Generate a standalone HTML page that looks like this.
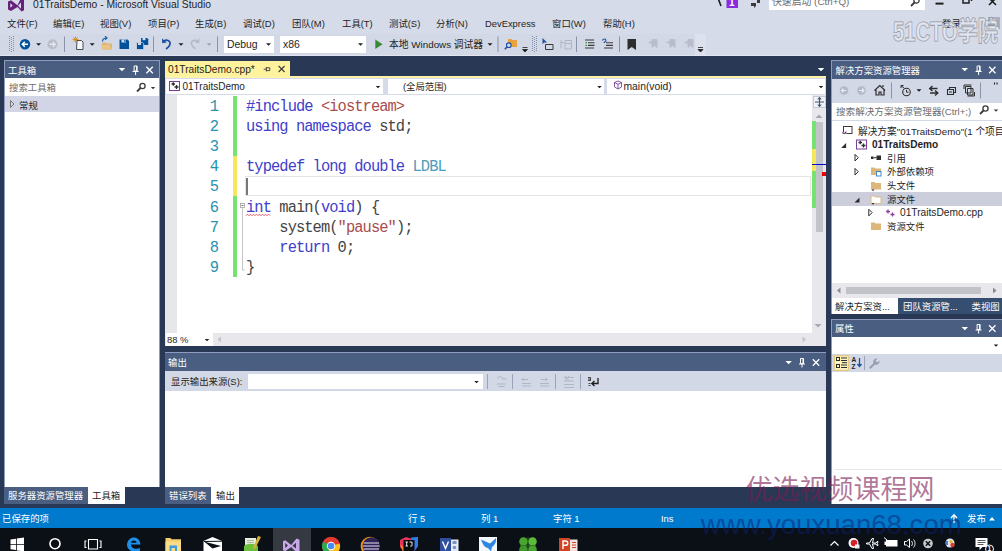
<!DOCTYPE html>
<html><head><meta charset="utf-8">
<style>
*{box-sizing:border-box;margin:0;padding:0}
html,body{width:1002px;height:551px;overflow:hidden;background:#293955}
body{position:relative;font-family:"Liberation Sans","Noto Sans CJK SC",sans-serif;font-size:9.4px;color:#1e1e1e}
.a{position:absolute;white-space:nowrap}
.top{left:0;top:0;width:1002px;height:56px;background:#d6dbe9}
.m{top:18px;font-size:9.4px;line-height:12px;color:#1e1e1e}
.pt{background:#4a5e81;color:#fff;font-size:9.4px}
.w{background:#fff}
.tb{background:#d2d8e6}
.code{transform:scaleY(1.08);transform-origin:0 60%;font-family:"Liberation Mono","Noto Sans CJK SC",monospace;font-size:15.4px;line-height:20px;letter-spacing:-0.910px;color:#444;left:246px}
.kw{color:#4040cc}.str{color:#aa4c4c}.ty{color:#4d9cba}
.ln{transform:scaleY(1.08);transform-origin:0 60%;font-family:"Liberation Mono",monospace;font-size:15.4px;line-height:20px;color:#2b91af;text-align:right;width:30px;left:189px}
.sep{width:1px;background:#8591ab}
.t{font-size:9.4px;line-height:13px;color:#1e1e1e}
.wt{color:#fff}
svg{position:absolute;overflow:visible}
</style></head><body>
<!-- top chrome -->
<div class="a top"></div>
<div class="a tb" style="left:0;top:34px;width:695px;height:20.500px"></div><div class="a" style="left:695px;top:34px;width:10.500px;height:20.500px;background:#dde1ee"></div><div class="a" style="left:0;top:54.500px;width:1002px;height:1.500px;background:#e2e6f0"></div>
<div class="a" style="left:33px;top:-2.300px;font-size:10.300px;line-height:14px;color:#1e1e1e">01TraitsDemo - Microsoft Visual Studio</div>
<!-- menu -->
<div class="a m" style="left:7px">文件(F)</div>
<div class="a m" style="left:53px">编辑(E)</div>
<div class="a m" style="left:100px">视图(V)</div>
<div class="a m" style="left:148px">项目(P)</div>
<div class="a m" style="left:195px">生成(B)</div>
<div class="a m" style="left:243px">调试(D)</div>
<div class="a m" style="left:292px">团队(M)</div>
<div class="a m" style="left:342px">工具(T)</div>
<div class="a m" style="left:389px">测试(S)</div>
<div class="a m" style="left:436px">分析(N)</div>
<div class="a m" style="left:485px">DevExpress</div>
<div class="a m" style="left:552px">窗口(W)</div>
<div class="a m" style="left:603px">帮助(H)</div>
<div class="a m" style="left:942px">登录</div>
<!-- quick launch -->
<div class="a w" style="left:769px;top:0;width:156px;height:10px"></div>
<div class="a" style="left:772px;top:-3.800px;font-size:9.850px;line-height:12px;color:#6d6d6d">快速启动 (Ctrl+Q)</div>
<!-- toolbar combos -->
<div class="a w" style="left:224px;top:36px;width:50px;height:17px"></div>
<div class="a" style="left:227px;top:38px;font-size:10.4px;line-height:13px">Debug</div>
<div class="a w" style="left:280px;top:36px;width:86px;height:17px"></div>
<div class="a" style="left:283px;top:38px;font-size:10.4px;line-height:13px">x86</div>
<div class="a" style="left:389px;top:38px;font-size:9.800px;line-height:13px">本地 Windows 调试器</div>

<!-- toolbox panel -->
<div class="a" style="left:4px;top:60px;width:156px;height:444px;background:#8e9bbc"></div>
<div class="a pt" style="left:5px;top:61px;width:154px;height:17px;line-height:19.500px;padding-left:3px">工具箱</div>
<div class="a w" style="left:5px;top:78px;width:154px;height:409px"></div>
<div class="a" style="left:9px;top:82px;font-size:9.400px;line-height:12px;color:#6d6d6d">搜索工具箱</div>
<div class="a" style="left:5px;top:96px;width:154px;height:16px;background:#d2d5e5"></div>
<div class="a t" style="left:19px;top:99px">常规</div>
<div class="a" style="left:4px;top:487px;width:156px;height:17px;background:#293955"></div>
<div class="a pt" style="left:4px;top:487px;width:84px;height:17px;line-height:18.500px;padding-left:4px">服务器资源管理器</div>
<div class="a w" style="left:88px;top:487px;width:37px;height:17px;line-height:18.500px;padding-left:4px">工具箱</div>

<!-- editor -->
<div class="a" style="left:165px;top:61px;width:125px;height:17px;background:#fff29d"></div>
<div class="a" style="left:165px;top:75.500px;width:661px;height:2.500px;background:#fdf3a8"></div>
<div class="a" style="left:168px;top:63px;font-size:10.200px;line-height:13px;color:#1e1e1e">01TraitsDemo.cpp*</div>
<div class="a" style="left:165px;top:78px;width:661px;height:17px;background:#d6dbe9"></div>
<div class="a w" style="left:166px;top:78.500px;width:217px;height:15.500px"></div>
<div class="a w" style="left:387.500px;top:78.500px;width:216.500px;height:15.500px"></div>
<div class="a w" style="left:607px;top:78.500px;width:218px;height:15.500px"></div>
<div class="a" style="left:182.500px;top:80px;font-size:10px;line-height:13px">01TraitsDemo</div>
<div class="a" style="left:403px;top:80px;font-size:9.400px;line-height:13px">(全局范围)</div>
<div class="a" style="left:623.500px;top:80px;font-size:10.350px;line-height:13px">main(void)</div>
<div class="a w" style="left:165px;top:94.500px;width:661px;height:238.500px"></div>
<div class="a" style="left:165px;top:95px;width:12px;height:238px;background:#e6e7e8"></div>
<div class="a" style="left:812px;top:94.500px;width:14px;height:238.500px;background:#e8e8ec"></div>
<div class="a" style="left:165px;top:333px;width:661px;height:13px;background:#e8e8ec"></div>
<div class="a w" style="left:166px;top:333px;width:47px;height:13px"></div>
<div class="a" style="left:167px;top:334px;font-size:9.4px;line-height:12px">88 %</div>
<!-- change bars -->
<div class="a" style="left:233px;top:96px;width:4px;height:60px;background:#75e272"></div>
<div class="a" style="left:233px;top:156px;width:4px;height:40px;background:#f6e65c"></div>
<div class="a" style="left:233px;top:196px;width:4px;height:81px;background:#75e272"></div>
<!-- current line -->
<div class="a" style="left:245px;top:176px;width:566px;height:20px;border:1px solid #e4e4e4"></div>
<div class="a" style="left:246px;top:178px;width:1.500px;height:17px;background:#777"></div>
<!-- line numbers -->
<div class="a ln" style="top:96.6px">1</div>
<div class="a ln" style="top:116.6px">2</div>
<div class="a ln" style="top:137.1px">3</div>
<div class="a ln" style="top:157.1px">4</div>
<div class="a ln" style="top:177.1px">5</div>
<div class="a ln" style="top:197.6px">6</div>
<div class="a ln" style="top:217.6px">7</div>
<div class="a ln" style="top:237.6px">8</div>
<div class="a ln" style="top:257.6px">9</div>
<!-- code -->
<div class="a code" style="top:96.6px"><span class="kw">#include</span> <span class="str">&lt;iostream&gt;</span></div>
<div class="a code" style="top:116.6px"><span class="kw">using namespace</span> std;</div>
<div class="a code" style="top:157.1px"><span class="kw">typedef long double</span> <span class="ty">LDBL</span></div>
<div class="a code" style="top:197.6px"><span class="kw">int</span> main(<span class="kw">void</span>) {</div>
<div class="a code" style="top:217.6px">&nbsp;&nbsp;&nbsp;&nbsp;system(<span class="str">"pause"</span>);</div>
<div class="a code" style="top:237.6px">&nbsp;&nbsp;&nbsp;&nbsp;<span class="kw">return</span> 0;</div>
<div class="a code" style="top:257.6px">}</div>
<!-- scrollbar -->
<div class="a" style="left:812px;top:121px;width:4px;height:87px;background:#75e272"></div>
<div class="a" style="left:812px;top:149px;width:4px;height:22px;background:#f6e65c"></div>
<div class="a" style="left:816px;top:122px;width:7px;height:110px;background:#c2c3c9"></div>
<div class="a" style="left:812px;top:164px;width:14px;height:1px;background:#0000cd"></div>
<div class="a" style="left:822px;top:172px;width:4px;height:4px;background:#e00"></div>

<!-- output panel -->
<div class="a" style="left:165px;top:352px;width:661px;height:20px;background:#8e9bbc"></div>
<div class="a pt" style="left:165px;top:353px;width:661px;height:18.300px;line-height:20.500px;padding-left:3px">输出</div>
<div class="a tb" style="left:165px;top:371.300px;width:661px;height:20px"></div>
<div class="a t" style="left:171px;top:375px">显示输出来源(S):</div>
<div class="a w" style="left:247.500px;top:374px;width:235px;height:15px"></div>
<div class="a w" style="left:165px;top:391.300px;width:661px;height:95.700px"></div>
<div class="a pt" style="left:165px;top:487px;width:46px;height:17px;line-height:18.500px;padding-left:4px">错误列表</div>
<div class="a w" style="left:211px;top:487px;width:28px;height:17px;line-height:18.500px;padding-left:5px">输出</div>

<!-- solution explorer -->
<div class="a" style="left:831px;top:60px;width:171px;height:254px;background:#8e9bbc"></div>
<div class="a pt" style="left:832px;top:61px;width:170px;height:18px;line-height:20.500px;padding-left:3.500px">解决方案资源管理器</div>
<div class="a tb" style="left:832px;top:79px;width:170px;height:42px"></div>
<div class="a w" style="left:832px;top:102.700px;width:170px;height:17px"></div>
<div class="a" style="left:836px;top:105px;font-size:9.600px;line-height:13px;color:#6d6d6d">搜索解决方案资源管理器(Ctrl+;)</div>
<div class="a w" style="left:832px;top:120.700px;width:170px;height:162.300px"></div>
<div class="a" style="left:832px;top:192px;width:170px;height:14px;background:#cccedb"></div>
<div class="a t" style="left:858px;top:124.500px;font-size:9.700px">解决方案"01TraitsDemo"(1 个项目)</div>
<div class="a t" style="left:872px;top:138px;font-weight:bold;font-size:10.100px">01TraitsDemo</div>
<div class="a t" style="left:887px;top:151.5px">引用</div>
<div class="a t" style="left:887px;top:165px">外部依赖项</div>
<div class="a t" style="left:887px;top:179px">头文件</div>
<div class="a t" style="left:887px;top:192.5px">源文件</div>
<div class="a t" style="left:900px;top:206px;font-size:10.200px">01TraitsDemo.cpp</div>
<div class="a t" style="left:887px;top:220px">资源文件</div>
<div class="a" style="left:832px;top:283px;width:170px;height:15px;background:#e8e8ec"></div>
<div class="a" style="left:845.500px;top:287px;width:135px;height:7px;background:#c2c3c9"></div>
<div class="a" style="left:832px;top:298px;width:170px;height:16px;background:#364e6f"></div>
<div class="a w" style="left:832px;top:298px;width:66px;height:16px;line-height:17.500px;padding-left:3px">解决方案资...</div>
<div class="a wt" style="left:903px;top:298px;line-height:17.500px">团队资源管...</div>
<div class="a wt" style="left:971.500px;top:298px;line-height:17.500px">类视图</div>

<!-- properties -->
<div class="a" style="left:831px;top:319px;width:171px;height:185px;background:#8e9bbc"></div>
<div class="a pt" style="left:832px;top:320px;width:170px;height:17px;line-height:18.500px;padding-left:3px">属性</div>
<div class="a w" style="left:832px;top:337px;width:170px;height:17px"></div>
<div class="a tb" style="left:832px;top:354.300px;width:170px;height:17.500px"></div>
<div class="a w" style="left:832px;top:371.800px;width:170px;height:132.200px"></div>
<div class="a" style="left:835px;top:469px;width:167px;height:1px;background:#e6e6e6"></div>

<!-- status bar -->
<div class="a" style="left:0;top:508px;width:1002px;height:19.500px;background:#007acc"></div>
<div class="a wt" style="left:2px;top:512px;line-height:13px">已保存的项</div>
<div class="a wt" style="left:408px;top:512px;line-height:13px">行 5</div>
<div class="a wt" style="left:481px;top:512px;line-height:13px">列 1</div>
<div class="a wt" style="left:553px;top:512px;line-height:13px">字符 1</div>
<div class="a wt" style="left:661px;top:512px;line-height:13px">Ins</div>
<div class="a wt" style="left:967px;top:512px;line-height:13px">发布</div>
<!-- taskbar -->
<div class="a" style="left:0;top:527.500px;width:1002px;height:23.500px;background:#0b1017"></div>
<div class="a" style="left:272.500px;top:527.500px;width:38px;height:23.500px;background:#353a42"></div>

<!-- icons -->
<svg class="a" style="left:0;top:0" width="1002" height="551" viewBox="0 0 1002 551"><path d="M8 1.5L11 0.2L17.5 5.2L21.5 -3L24 -2V10.2L21.5 11.4L17.5 7L11 11L8 9.6zM10.3 3.3V7.8L12.8 5.5zM21 2.5L18 5.7L21 8.8z" fill="#68217a" fill-rule="evenodd"/>
<path d="M718 -2L721 6" stroke="#1e1e1e" stroke-width="1.6"/>
<rect x="726.5" y="-2" width="11.5" height="10" fill="#8a2be2"/>
<path d="M751 3h5v3l-2 2v-2h-3zM757 0h3v3h-3z" fill="#3b3b3b"/>
<g stroke="#3b3b3b" fill="none"><circle cx="916.5" cy="0.5" r="2.6" stroke-width="1.3"/><path d="M914.5 2.5L911 6" stroke-width="1.8"/></g>
<path d="M935.500 3.600h8" stroke="#1e1e1e" stroke-width="2"/>
<path d="M963 -3h6v6h-6zM965.5 -5h6v6" stroke="#1e1e1e" stroke-width="1.500" fill="none"/>
<path d="M989 -2L996 5M996 -2L989 5" stroke="#1e1e1e" stroke-width="1.600"/>
<rect x="988" y="17" width="12" height="12" fill="#a9afbd"/><circle cx="994" cy="21.5" r="2.2" fill="#e8ebf2"/><path d="M989.5 29c0-4 9-4 9 0z" fill="#e8ebf2"/>
<rect x="9" y="36" width="1" height="1" fill="#8591ab"/><rect x="11" y="37" width="1" height="1" fill="#8591ab"/><rect x="13" y="36" width="1" height="1" fill="#8591ab"/>
<rect x="532" y="36" width="1" height="1" fill="#8591ab"/><rect x="534" y="37" width="1" height="1" fill="#8591ab"/><rect x="536" y="36" width="1" height="1" fill="#8591ab"/>
<rect x="9" y="38" width="1" height="1" fill="#8591ab"/><rect x="11" y="39" width="1" height="1" fill="#8591ab"/><rect x="13" y="38" width="1" height="1" fill="#8591ab"/>
<rect x="532" y="38" width="1" height="1" fill="#8591ab"/><rect x="534" y="39" width="1" height="1" fill="#8591ab"/><rect x="536" y="38" width="1" height="1" fill="#8591ab"/>
<rect x="9" y="40" width="1" height="1" fill="#8591ab"/><rect x="11" y="41" width="1" height="1" fill="#8591ab"/><rect x="13" y="40" width="1" height="1" fill="#8591ab"/>
<rect x="532" y="40" width="1" height="1" fill="#8591ab"/><rect x="534" y="41" width="1" height="1" fill="#8591ab"/><rect x="536" y="40" width="1" height="1" fill="#8591ab"/>
<rect x="9" y="42" width="1" height="1" fill="#8591ab"/><rect x="11" y="43" width="1" height="1" fill="#8591ab"/><rect x="13" y="42" width="1" height="1" fill="#8591ab"/>
<rect x="532" y="42" width="1" height="1" fill="#8591ab"/><rect x="534" y="43" width="1" height="1" fill="#8591ab"/><rect x="536" y="42" width="1" height="1" fill="#8591ab"/>
<rect x="9" y="44" width="1" height="1" fill="#8591ab"/><rect x="11" y="45" width="1" height="1" fill="#8591ab"/><rect x="13" y="44" width="1" height="1" fill="#8591ab"/>
<rect x="532" y="44" width="1" height="1" fill="#8591ab"/><rect x="534" y="45" width="1" height="1" fill="#8591ab"/><rect x="536" y="44" width="1" height="1" fill="#8591ab"/>
<rect x="9" y="46" width="1" height="1" fill="#8591ab"/><rect x="11" y="47" width="1" height="1" fill="#8591ab"/><rect x="13" y="46" width="1" height="1" fill="#8591ab"/>
<rect x="532" y="46" width="1" height="1" fill="#8591ab"/><rect x="534" y="47" width="1" height="1" fill="#8591ab"/><rect x="536" y="46" width="1" height="1" fill="#8591ab"/>
<rect x="9" y="48" width="1" height="1" fill="#8591ab"/><rect x="11" y="49" width="1" height="1" fill="#8591ab"/><rect x="13" y="48" width="1" height="1" fill="#8591ab"/>
<rect x="532" y="48" width="1" height="1" fill="#8591ab"/><rect x="534" y="49" width="1" height="1" fill="#8591ab"/><rect x="536" y="48" width="1" height="1" fill="#8591ab"/>
<rect x="9" y="50" width="1" height="1" fill="#8591ab"/><rect x="11" y="51" width="1" height="1" fill="#8591ab"/><rect x="13" y="50" width="1" height="1" fill="#8591ab"/>
<rect x="532" y="50" width="1" height="1" fill="#8591ab"/><rect x="534" y="51" width="1" height="1" fill="#8591ab"/><rect x="536" y="50" width="1" height="1" fill="#8591ab"/>
<circle cx="25" cy="44.3" r="5.2" fill="#00529b"/><path d="M28 44.3H22.6M24.8 41.8L22.3 44.3L24.8 46.8" stroke="#fff" stroke-width="1.5" fill="none"/>
<path d="M36.1 43.25h5l-2.5 2.5z" fill="#1e1e1e"/>
<circle cx="52.5" cy="44.3" r="5" fill="#b9bdc9"/><path d="M49.5 44.3H55M52.8 41.9L55.2 44.3L52.8 46.7" stroke="#e4e7ef" stroke-width="1.4" fill="none"/>
<path d="M64.5 36.5V52" stroke="#8a93a8" stroke-width="1"/>
<path d="M77 40.5h4.5l1.5 1.5v7.5h-6.5z" fill="#f4f6fa" stroke="#3b3b3b" stroke-width="0.9"/><path d="M75.5 36.5v6M72.5 39.5h6M73.4 37.4l4.2 4.2M77.6 37.4l-4.2 4.2" stroke="#d9932a" stroke-width="1"/>
<path d="M89.7 43.25h5l-2.5 2.5z" fill="#1e1e1e"/>
<path d="M102 42.5h4l1 1h5v6h-10z" fill="#dcb67a"/><path d="M101 45h8.5l2.5 4.5h-10z" fill="#eac282"/><path d="M102.5 41.5c0-2.5 1.5-3.5 4-3.500M105 36.3l2 1.7l-2 1.700" stroke="#1e62b8" stroke-width="1.2" fill="none"/>
<path d="M119.5 39.500h8l1.500 1.500v8h-9.500z" fill="#00529b"/><rect x="121.500" y="39.500" width="4.500" height="3" fill="#d6dbe9"/><rect x="124.300" y="40" width="1.200" height="2" fill="#00529b"/>
<path d="M141 38h6l1.200 1.200v5.800h-7.200z" fill="#00529b"/><rect x="142.500" y="38" width="3" height="2.200" fill="#d6dbe9"/><path d="M136.500 42.500h6l1.200 1.200v5.800h-7.200z" fill="#00529b" stroke="#d6dbe9" stroke-width="0.8"/><rect x="138" y="42.800" width="3" height="2.200" fill="#d6dbe9"/>
<path d="M153.5 36.5V52" stroke="#8a93a8" stroke-width="1"/>
<path d="M163.500 41.500c3-2.500 7-1 6.500 2.500c-0.300 2.200-2 3.700-4 5" stroke="#1c4fa3" stroke-width="1.700" fill="none"/><path d="M162 38.500l0.300 4.800l4.500-0.800z" fill="#1c4fa3"/>
<path d="M178.5 43.25h5l-2.5 2.5z" fill="#1e1e1e"/>
<path d="M198 41.500c-3-2.500-7-1-6.500 2.500c0.300 2.200 2 3.700 4 5" stroke="#b3b9c8" stroke-width="1.500" fill="none"/><path d="M199.500 38.500l-0.300 4.800l-4.500-0.800z" fill="#b3b9c8"/>
<path d="M206.7 43.25h5l-2.5 2.5z" fill="#9aa2b5"/>
<path d="M217.5 36.5V52" stroke="#8a93a8" stroke-width="1"/>
<path d="M266.0 43.25h5l-2.5 2.5z" fill="#1e1e1e"/>
<path d="M358.0 43.25h5l-2.5 2.5z" fill="#1e1e1e"/>
<path d="M375.300 39.500l7.200 4.800l-7.200 4.800z" fill="#388a34"/>
<path d="M487.5 43.25h5l-2.5 2.5z" fill="#1e1e1e"/>
<path d="M498 36.5V52" stroke="#8a93a8" stroke-width="1"/>
<path d="M508 39h3.500l1 1h4.500v7h-9z" fill="#e8a33d"/><circle cx="508.800" cy="45.200" r="2.300" fill="#d6dbe9" stroke="#1c4fa3" stroke-width="1.100"/><path d="M507.300 46.800l-2.500 2.500" stroke="#1c4fa3" stroke-width="1.500"/>
<path d="M522.500 47.500h5M522.500 49.500h5l-2.500 2.500z" stroke="#1e1e1e" stroke-width="0.800" fill="#1e1e1e"/>
<path d="M542.500 38l4.500 4.500h-2.800l-1.700 1.800z" fill="#1c4fa3"/><path d="M545.500 44.500h7.500v5h-7.500z" fill="none" stroke="#3b3b3b" stroke-width="1"/>
<path d="M561 40v8.500M561 42.500h3M565 40.500h6.500v8.500h-6.500zM565 43.500h6.500" fill="none" stroke="#b0b6c6" stroke-width="1"/>
<path d="M576.5 36.5V52" stroke="#8a93a8" stroke-width="1"/>
<path d="M585 40h9M588 42.700h6.500M588 45.400h6.500M585 48h9" stroke="#3b3b3b" stroke-width="1.100"/><path d="M585.500 42.700h1.500M585.500 45.400h1.500" stroke="#388a34" stroke-width="1.200"/>
<path d="M606 42.700h7M606 45.400h7M604 48h9" stroke="#3b3b3b" stroke-width="1.100"/><path d="M602.500 40.500c0.500-2 3.500-2 3.500 0c0 1.200-2 1.300-2 2.500" stroke="#1c4fa3" stroke-width="1.100" fill="none"/>
<path d="M619.5 36.5V52" stroke="#8a93a8" stroke-width="1"/>
<path d="M627.500 39h8.500v11l-4.250-3l-4.250 3z" fill="#2d2d2d"/>
<path d="M652 39.500h5v8l-2.500-2l-2.500 2zM648 42.500h3.500M650 41l1.800 1.500l-1.800 1.500" fill="#b8bdcb" stroke="#b8bdcb" stroke-width="0.800"/>
<path d="M670 39.500h5v8l-2.500-2l-2.500 2zM666 42.500h3.500M668 41l1.800 1.500l-1.800 1.500" fill="#b8bdcb" stroke="#b8bdcb" stroke-width="0.800"/>
<path d="M688 39.500h5v8l-2.500-2l-2.500 2zM684 42.500h3.500M686 41l1.800 1.500l-1.800 1.500" fill="#b8bdcb" stroke="#b8bdcb" stroke-width="0.800"/>
<path d="M698 47.500h5M698 49.500h5l-2.500 2.500z" stroke="#1e1e1e" stroke-width="0.800" fill="#1e1e1e"/>
<path d="M118.75 67.975h6.5l-3.25 3.25z" fill="#fff"/>
<g stroke="#fff" stroke-width="1" fill="none"><path d="M134.1 66h3v5h-3z"/><path d="M132.6 71.5h6M135.6 71.5v3.5"/></g><path d="M136.1 66h1v5h-1z" fill="#fff"/>
<path d="M146.4 66.8L152.79999999999998 73.2M152.79999999999998 66.8L146.4 73.2" stroke="#fff" stroke-width="1.3" fill="none"/>
<g stroke="#3b3b3b" fill="none"><circle cx="142.5" cy="86.0" r="2.6" stroke-width="1.3"/><path d="M140.5 88.0L137 91.5" stroke-width="1.8"/></g>
<path d="M150.75 86.875h4.5l-2.25 2.25z" fill="#3b3b3b"/>
<path d="M10.500 100.500l3.500 3.500l-3.500 3.500z" fill="none" stroke="#6d6d6d" stroke-width="0.900"/>
<g stroke="#3a3a3a" stroke-width="0.900" fill="none"><path d="M266.300 67v4.400M266.300 67.800h3.500v2.800h-3.500M263.700 69.200h2.600"/></g>
<path d="M278.6 66L284.6 72M284.6 66L278.6 72" stroke="#3a3a3a" stroke-width="1.1" fill="none"/>
<path d="M817.75 67.875h6.5l-3.25 3.25z" fill="#fff"/>
<rect x="169.500" y="81.500" width="10" height="9" fill="#fff" stroke="#7b3f98" stroke-width="1"/><path d="M171.500 84h3.500M173.250 82.300v3.400M174.500 87h4M176.500 85v4" stroke="#2d2d2d" stroke-width="1.300"/>
<path d="M375.75 85.875h4.5l-2.25 2.25z" fill="#1e1e1e"/>
<path d="M597.25 85.875h4.5l-2.25 2.25z" fill="#1e1e1e"/>
<path d="M818.75 85.875h4.5l-2.25 2.25z" fill="#1e1e1e"/>
<path d="M614.500 82.500l3.500-1.500l3.500 1.500v4.500l-3.500 2l-3.500-2zM614.500 82.500l3.500 1.800l3.500-1.800M618 84.300v4.500" fill="none" stroke="#7b3f98" stroke-width="0.900"/>
<rect x="813.500" y="96.500" width="12" height="11" fill="#f2f3f7" stroke="#c8cad4"/><path d="M819.500 97.500v9M815 102h9M817.800 99.500l1.700-2l1.700 2M817.800 104.500l1.700 2l1.700-2" stroke="#3c5a78" stroke-width="1.100" fill="none"/>
<path d="M815.500 118l3.500-3.500l3.500 3.500z" fill="#a6a8b3"/>
<path d="M814.500 324l3.500 3.500l3.500-3.500z" fill="#a6a8b3"/>
<path d="M221 336.500v6l-3.500-3z" fill="#c2c4cc"/><path d="M802.500 336.500v6l3.500-3z" fill="#c2c4cc"/>
<path d="M204.75 338.875h4.5l-2.25 2.25z" fill="#1e1e1e"/>
<rect x="240.500" y="203.500" width="4" height="4" fill="#fff" stroke="#a0a0a0" stroke-width="0.800"/><path d="M241.500 205.500h2" stroke="#555" stroke-width="0.800"/><path d="M242.500 208v62h2.500" stroke="#b8b8b8" stroke-width="0.800" fill="none"/>
<path d="M246 215.700l1.500-1.500l1.500 1.500l1.500-1.500l1.500 1.500l1.500-1.500l1.500 1.500l1.500-1.500l1.500 1.500l1.500-1.500l1.500 1.500l1.500-1.500l1.500 1.500l1.500-1.500l1.500 1.500l1.500-1.500l1.500 1.500" stroke="#e0424d" stroke-width="0.900" fill="none"/>
<path d="M785.45 360.875h6.5l-3.25 3.25z" fill="#fff"/>
<g stroke="#fff" stroke-width="1" fill="none"><path d="M800.5 358.5h3v5h-3z"/><path d="M799 364.0h6M802 364.0v3.5"/></g><path d="M802.5 358.5h1v5h-1z" fill="#fff"/>
<path d="M812.8 359.3L819.2 365.7M819.2 359.3L812.8 365.7" stroke="#fff" stroke-width="1.3" fill="none"/>
<path d="M474.25 380.875h4.5l-2.25 2.25z" fill="#1e1e1e"/>
<path d="M487.5 374V389" stroke="#9aa3b8" stroke-width="1"/>
<path d="M512.5 374V389" stroke="#9aa3b8" stroke-width="1"/>
<path d="M555.5 374V389" stroke="#9aa3b8" stroke-width="1"/>
<path d="M580.5 374V389" stroke="#9aa3b8" stroke-width="1"/>
<g stroke="#b0b6c6" stroke-width="1" fill="none"><path d="M497 384h9M498.500 386.500h6M497.500 378.500c1-2.500 5-2.500 5 0.500h4"/></g>
<g stroke="#b0b6c6" stroke-width="1" fill="none"><path d="M522 383.500h9M522 386h9M522 379.500h6M523.500 378l-1.800 1.500l1.800 1.500"/></g>
<g stroke="#b0b6c6" stroke-width="1" fill="none"><path d="M540 383.500h9M540 386h9M541 379.500h6M545.500 378l1.800 1.500l-1.800 1.500"/></g>
<g stroke="#b0b6c6" stroke-width="1" fill="none"><path d="M564 377.500h10M564 381h10M564 384.500h10M564 387.500h10M565 376l4 4.500M569 376l-4 4.500"/></g>
<g stroke="#1e1e1e" stroke-width="1.300" fill="none"><path d="M598 378v5.500h-6M594.500 381l-2.700 2.500l2.700 2.500"/></g><path d="M588 377.500h2.500v3h-2.500M588 379h2.500M588.500 383.500h2M588.500 385.500h2" stroke="#1e1e1e" stroke-width="0.800" fill="none"/>
<path d="M961.55 68.075h6.5l-3.25 3.25z" fill="#fff"/>
<g stroke="#fff" stroke-width="1" fill="none"><path d="M977.1 66h3v5h-3z"/><path d="M975.6 71.5h6M978.6 71.5v3.5"/></g><path d="M979.1 66h1v5h-1z" fill="#fff"/>
<path d="M989.0999999999999 66.8L995.5 73.2M995.5 66.8L989.0999999999999 73.2" stroke="#fff" stroke-width="1.3" fill="none"/>
<circle cx="844" cy="90.500" r="4.300" fill="#b3b8c6"/><path d="M846.500 90.500h-4.800M843.500 88.500l-2 2l2 2" stroke="#e8ebf2" stroke-width="1.200" fill="none"/>
<circle cx="861.500" cy="90.500" r="4.300" fill="#b3b8c6"/><path d="M859 90.500h4.800M862 88.500l2 2l-2 2" stroke="#e8ebf2" stroke-width="1.200" fill="none"/>
<path d="M874.500 90.500l5.300-5l5.300 5M876 90v5h3v-3h2v3h3v-5M883 87v-2" stroke="#2d2d2d" stroke-width="1.200" fill="none"/>
<path d="M891.5 82.5V98.5" stroke="#8a93a8" stroke-width="1"/>
<circle cx="906.500" cy="92" r="3.800" fill="none" stroke="#2d2d2d" stroke-width="1.100"/><path d="M906.500 89.800v2.400h2M901 85.500l3 2.500M901 85.500h2.500M901 85.500v2.500" stroke="#2d2d2d" stroke-width="1" fill="none"/>
<path d="M916.5 89.25h5l-2.5 2.5z" fill="#1e1e1e"/>
<path d="M937.500 88.500h-7.500M932.500 86l-2.800 2.500l2.800 2.500M930 93h7.500M935 90.500l2.800 2.500l-2.800 2.500" stroke="#2d2d2d" stroke-width="1.400" fill="none"/>
<path d="M947.500 89.500h6v5h-6zM949.500 89.500v-2h6v5h-2M949 92h3" stroke="#2d2d2d" stroke-width="1.100" fill="none"/>
<path d="M965.500 86.500h5.500v6.500h-5.500zM967.500 88.500h5.500v6.500h-5.500zM964 89v-4h7.500M974.500 92v4h-7" stroke="#2d2d2d" stroke-width="1" fill="none"/>
<path d="M980.5 82.5V98.5" stroke="#8a93a8" stroke-width="1"/>
<path d="M994.500 82.500v2M997 82.500v2" stroke="#1e1e1e" stroke-width="1.100"/>
<g stroke="#3b3b3b" fill="none"><circle cx="985.5" cy="108.5" r="2.6" stroke-width="1.3"/><path d="M983.5 110.5L980 114" stroke-width="1.8"/></g>
<path d="M993.75 109.375h4.5l-2.25 2.25z" fill="#3b3b3b"/>
<rect x="843.500" y="126.500" width="8.500" height="7" fill="#fff" stroke="#3b3b3b" stroke-width="1"/><path d="M842 131.500l2 1.500l2.500-2.500v4l-2.500-2.200l-2 1.700z" fill="#68217a" stroke="#fff" stroke-width="0.400"/>
<path d="M846.1 143.0v5h-5z" fill="#2d2d2d"/>
<rect x="856.500" y="140" width="10" height="9" fill="#fff" stroke="#7b3f98" stroke-width="1"/><path d="M858.500 142.500h3.500M860.250 140.800v3.400M861.500 145.500h4M863.500 143.500v4" stroke="#2d2d2d" stroke-width="1.300"/>
<path d="M855.0 154.39999999999998l3.300 3.300l-3.300 3.300z" fill="none" stroke="#2d2d2d" stroke-width="1"/>
<rect x="871" y="156.500" width="2.500" height="2.500" fill="#2d2d2d"/><path d="M873.500 157.700h3" stroke="#2d2d2d"/><rect x="876.500" y="155.500" width="4.500" height="4.500" fill="#2d2d2d"/>
<path d="M855.0 168.39999999999998l3.300 3.300l-3.300 3.300z" fill="none" stroke="#2d2d2d" stroke-width="1"/>
<path d="M871 167.5h3.500l1 1h5.500v6.500h-10z" fill="#dcb67a"/>
<rect x="876.500" y="171.500" width="4.500" height="4.500" fill="#fff" stroke="#3a8bd0" stroke-width="1"/>
<path d="M871 182.0h3.500l1 1h5.500v6.500h-10z" fill="#dcb67a"/>
<path d="M871.500 189.500h3l-1.500 1.800z" fill="#2d2d2d"/>
<path d="M859.5 197.5v5h-5z" fill="#2d2d2d"/>
<path d="M871 196h3.500l1 1h5.500v6.500h-10z" fill="#fff" stroke="#dcb67a" stroke-width="0.900"/><path d="M871.500 203h3l-1.500 1.800z" fill="#2d2d2d"/>
<path d="M868.8 209.29999999999998l3.300 3.300l-3.300 3.300z" fill="none" stroke="#2d2d2d" stroke-width="1"/>
<path d="M886 211.500h4M888 209.500v4M890.500 214.500h4M892.500 212.500v4" stroke="#8b3fa0" stroke-width="1.300"/>
<path d="M871 222.5h3.500l1 1h5.500v6.500h-10z" fill="#dcb67a"/>
<path d="M840.500 287.500v6l-3.500-3z" fill="#868999"/><path d="M993 287.500v6l3.500-3z" fill="#868999"/>
<path d="M961.55 326.875h6.5l-3.25 3.25z" fill="#fff"/>
<g stroke="#fff" stroke-width="1" fill="none"><path d="M977.1 324.5h3v5h-3z"/><path d="M975.6 330.0h6M978.6 330.0v3.5"/></g><path d="M979.1 324.5h1v5h-1z" fill="#fff"/>
<path d="M989.0999999999999 325.3L995.5 331.7M995.5 325.3L989.0999999999999 331.7" stroke="#fff" stroke-width="1.3" fill="none"/>
<path d="M993.75 344.375h4.5l-2.25 2.25z" fill="#1e1e1e"/>
<rect x="834.300" y="355.800" width="14" height="14.500" fill="#fdf4bf" stroke="#e5c365"/>
<g stroke="#2d2d2d" stroke-width="1" fill="none"><rect x="836.500" y="357.500" width="3" height="3"/><rect x="836.500" y="364.500" width="3" height="3"/><path d="M841 358h6M841 360.500h6M841 365h6M841 367.500h6M842 362.700h5"/></g>
<path d="M859.500 358v8M857.500 364l2 2.500l2-2.500" stroke="#1c4fa3" stroke-width="1.300" fill="none"/>
<path d="M864.5 356V370" stroke="#9aa3b8" stroke-width="1"/>
<path d="M869.500 367l4-4c-1-2.500 1-5 4-4.300l-2 2l1.800 1.800l2-2c0.700 3-1.800 5-4.300 4l-4 4c-1 0.800-2.300-0.500-1.500-1.500z" fill="#9a9fb0"/>
<path d="M954 523v-8M951 518l3-3.200l3 3.200" stroke="#fff" stroke-width="1.300" fill="none"/>
<path d="M989 520.500l3-3.500l3 3.500z" fill="#fff"/></svg>
<div class="a" style="left:729px;top:-3px;font-size:10px;line-height:11px;color:#fff;font-weight:bold">1</div>
<div class="a" style="left:851.5px;top:356px;font-size:6.5px;line-height:7px;font-weight:bold;color:#1e1e1e">A<br>Z</div>
<svg class="a" style="left:0;top:0" width="1002" height="551" viewBox="0 0 1002 551"><path d="M10.500 539.500l5.500-0.800v5.300h-5.500zM16.800 538.600l7.200-1v6.400h-7.200zM10.500 544.800h5.500v5.300l-5.500-0.800zM16.800 544.800h7.200v6.600l-7.200-1z" fill="#fff"/>
<circle cx="55" cy="543.700" r="5" fill="none" stroke="#fff" stroke-width="1.600"/>
<path d="M88.500 539.500h9v9.500h-9zM86.500 541h-1.500v6.500h1.500M99.500 541h1.500v6.500h-1.500" fill="none" stroke="#fff" stroke-width="1.100"/>
<path d="M127 545c0.500-10 13-10 13.500-0.500h-9.500c0.300 4.500 5.500 5 9 3.500v2.800c-5 2-12.500 1-13-5.800zM131 542.800h5.500c-0.200-3-5-3-5.500 0z" fill="#1e8fe6" fill-rule="evenodd"/>
<path d="M165.500 538h5l1 1.300h9.500v12h-15.500z" fill="#f3ce6a"/><path d="M165.500 541.500h15.500v10h-15.500z" fill="#f8dc8a"/><path d="M169.500 545.500h7.500v6h-7.500z" fill="#3f9be0"/><path d="M171.500 548h3.500v4h-3.500z" fill="#f8dc8a"/>
<path d="M203.500 541l9 -4l9.500 4v10h-18.500z" fill="#fff"/><path d="M204 541.500l17 4.500l-8.500 2.500z" fill="#0b1017"/><path d="M204 541.500l18-0.300" stroke="#0b1017" stroke-width="1"/>
<rect x="245" y="538" width="11" height="13" fill="#e9efe0"/><path d="M244 546c3-3 10-3 14 0v5h-14z" fill="#6cbf3a"/><path d="M258 536l3 1l-6 12l-2-1z" fill="#d8b13a"/><path d="M247 540.500h7M247 542.500h7" stroke="#9aa78a" stroke-width="0.800"/>
<path d="M283 541.200l2.200-1l6 4.700l5.300-6.400l3 1.300v11.500l-3 1.300l-5.300-5.700l-6 4.300l-2.200-1zM285.200 543v5l2.800-2.500zM296 542.800l-3.500 2.900l3.500 2.900z" fill="#c9a8ea" fill-rule="evenodd"/>

<circle cx="331" cy="546" r="9" fill="#e23a2e"/><path d="M331 546L323.200 541.500A9 9 0 0 0 327.500 554.300z" fill="#2da94f"/><path d="M331 546L327.500 554.300A9 9 0 0 0 339.700 543.500z" fill="#fbc116"/><path d="M323.200 541.500A9 9 0 0 1 339.700 543.500L331 543z" fill="#e23a2e"/><circle cx="331" cy="546" r="4.200" fill="#fff"/><circle cx="331" cy="546" r="3.300" fill="#4a8af4"/>
<circle cx="370" cy="546" r="9.300" fill="#f7941e"/><circle cx="371.300" cy="546" r="8.700" fill="#2c2255"/><path d="M363.500 543h15.500M363 546h16.500M363.500 549h15.500" stroke="#e8e4f4" stroke-width="1.200"/>
<path d="M400 540l6-3l6 2l6-2v9l-4 6h-10l-4-5z" fill="#e8345a"/><path d="M411 537.500l7-0.500v9l-4 5.500z" fill="#2f7de8"/><path d="M400 544l3 7.500h5z" fill="#f58a1f"/><rect x="403.500" y="540" width="11" height="11" fill="#0b0b0b"/><path d="M405.500 542h2.500M406.700 542v4M405.500 546h2.500M409.500 542h2.500v3.500c0 0.800-0.800 0.800-1.800 0.500" stroke="#fff" stroke-width="0.900" fill="none"/>
<rect x="448" y="539.500" width="10.500" height="11.500" fill="#e6ebf5"/><rect x="440" y="538" width="11" height="13.500" fill="#2f4f9e"/><path d="M442.500 541.500l3 7l3-7" stroke="#fff" stroke-width="1.400" fill="none"/><rect x="452.500" y="541" width="4" height="3" fill="#7d93c8"/><circle cx="454.500" cy="547.500" r="1.800" fill="#7d93c8"/>
<rect x="479" y="537" width="18" height="14" fill="#f2f7fc"/><path d="M481 539.500l9 4l6-5.500c0.500 4-1 7-4 9l-1 4.500l-3-3.500c-3 0-5.500-4-7-8.500z" fill="#2f86e0"/>
<circle cx="523.500" cy="541.500" r="4.300" fill="#4aa52e"/><circle cx="532.500" cy="541.500" r="4.300" fill="#5dbb3a"/><circle cx="523.500" cy="549.500" r="4.300" fill="#3f982a"/><circle cx="532.500" cy="549.500" r="4.300" fill="#4aa52e"/><path d="M528 537v14M520 545.500h16" stroke="#2f7a1e" stroke-width="0.800"/>
<rect x="567" y="539.500" width="10.500" height="11.500" fill="#f3e3de"/><rect x="559" y="538" width="11" height="13.500" fill="#d04423"/><path d="M563 549v-8h2.500c3 0 3 4.300 0 4.300h-2.500" stroke="#fff" stroke-width="1.400" fill="none"/><path d="M572 542.500h4M572 545h4M572 547.500h4" stroke="#d04423" stroke-width="1"/>
<path d="M830.500 545.500l4-4l4 4" stroke="#fff" stroke-width="1.200" fill="none"/>
<circle cx="853.500" cy="543" r="5" fill="#fff"/><circle cx="854" cy="543" r="3.300" fill="#d3222a"/><rect x="855" y="544.500" width="4.500" height="4" fill="#f2f2f2"/>
<path d="M866.500 543h3l2.500-4.500h1.500l-1 4.500h3.500l1-1.500h1l-0.500 2l0.500 2h-1l-1-1.500h-3.500l1 4.500h-1.500l-2.500-4.500h-3z" fill="none" stroke="#fff" stroke-width="1"/>
<rect x="886" y="540" width="11.500" height="6.500" fill="#fff"/><rect x="884.500" y="541.500" width="1.500" height="3.500" fill="#fff"/><path d="M884 537.500l3 2.500" stroke="#fff" stroke-width="1"/>
<path d="M904.500 541.500h2l3-2.500v8.500l-3-2.500h-2z" fill="none" stroke="#fff" stroke-width="1"/><path d="M911.500 541c1.200 1.200 1.200 3.800 0 5M913.500 539.500c2 2 2 6 0 8" stroke="#fff" stroke-width="0.900" fill="none"/>
<circle cx="928" cy="543.500" r="4.800" fill="#c9c9c9"/><path d="M925.800 541.300l4.400 4.400M930.200 541.300l-4.400 4.400" stroke="#0b1017" stroke-width="1.500"/>
<circle cx="950" cy="543" r="4.500" fill="#dfe7f2"/><circle cx="952.500" cy="545" r="2.200" fill="#e03a2e"/><circle cx="951" cy="541.500" r="1.600" fill="#f2b31c"/><path d="M947 541v4" stroke="#2b62b8" stroke-width="1.600"/>
<path d="M975.500 538h12v9h-5l-3 3v-3h-4z" fill="#fff"/><path d="M977.500 540.500h8M977.500 542.500h8M977.500 544.500h6" stroke="#0b1017" stroke-width="0.700"/><circle cx="989.500" cy="549" r="4" fill="#0b1017" stroke="#fff" stroke-width="1"/></svg>
<div class="a" style="left:987.500px;top:545px;font-size:6.500px;line-height:8px;color:#fff;font-weight:bold">1</div>
<!-- watermarks -->
<svg class="a" style="left:890px;top:14px" width="112" height="34" viewBox="0 0 112 34"><text x="3" y="27" font-family="'Liberation Sans','Noto Sans CJK SC',sans-serif" font-weight="bold" font-size="27" textLength="105" lengthAdjust="spacingAndGlyphs" fill="rgba(236,239,246,0.550)" stroke="rgba(120,126,140,0.800)" stroke-width="1.100" paint-order="stroke">51CTO学院</text></svg>

<div class="a" style="left:745.500px;top:472px;font-size:27px;line-height:36px;color:rgba(125,25,80,0.600)">优选视频课程网</div>
<div class="a" style="left:701px;top:507.300px;font-size:27.600px;line-height:36px;color:rgba(15,30,110,0.520)">www.youxuan68.com</div>
</body></html>
